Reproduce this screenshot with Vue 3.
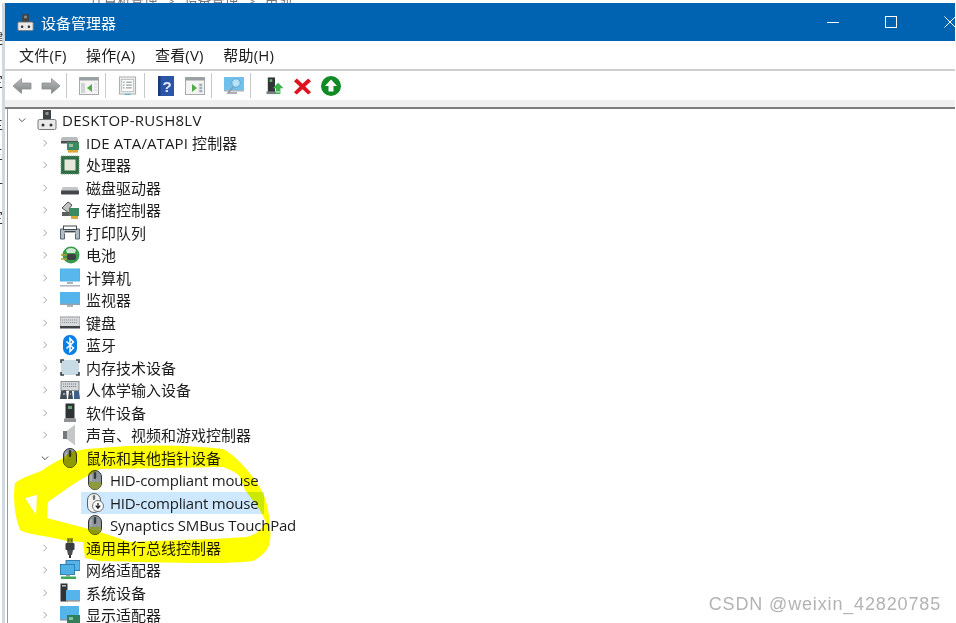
<script setup>
const fragments = [
  { y: 27, t: '键' }, { y: 70, t: '定' }, { y: 113, t: '主' }, { y: 143, t: '三' },
  { y: 173, t: '十' }, { y: 206, t: '定' }
]
const rows = [
  { level: 0, open: true, icon: 'dm', text: 'DESKTOP-RUSH8LV' },
  { level: 1, icon: 'ide', text: 'IDE ATA/ATAPI 控制器', wide: true },
  { level: 1, icon: 'cpu', text: '处理器' },
  { level: 1, icon: 'disk', text: '磁盘驱动器' },
  { level: 1, icon: 'storage', text: '存储控制器' },
  { level: 1, icon: 'printer', text: '打印队列' },
  { level: 1, icon: 'battery', text: '电池' },
  { level: 1, icon: 'computer', text: '计算机' },
  { level: 1, icon: 'monitor', text: '监视器' },
  { level: 1, icon: 'keyboard', text: '键盘' },
  { level: 1, icon: 'bluetooth', text: '蓝牙' },
  { level: 1, icon: 'memory', text: '内存技术设备' },
  { level: 1, icon: 'hid', text: '人体学输入设备' },
  { level: 1, icon: 'software', text: '软件设备' },
  { level: 1, icon: 'sound', text: '声音、视频和游戏控制器' },
  { level: 1, open: true, icon: 'mouse', text: '鼠标和其他指针设备' },
  { level: 2, icon: 'mouse', text: 'HID-compliant mouse' },
  { level: 2, icon: 'mouseoff', text: 'HID-compliant mouse', selected: true },
  { level: 2, icon: 'mouse', text: 'Synaptics SMBus TouchPad' },
  { level: 1, icon: 'usb', text: '通用串行总线控制器' },
  { level: 1, icon: 'network', text: '网络适配器' },
  { level: 1, icon: 'system', text: '系统设备' },
  { level: 1, icon: 'display', text: '显示适配器' }
]
const menus = ['文件(F)', '操作(A)', '查看(V)', '帮助(H)']
const toolbar = [
  ['back', 'fwd'], ['winleft'], ['sheet'], ['help', 'winright'], ['scan'], ['devup', 'redx', 'greenup']
]
</script>

<template>
  <div class="page">
    <svg class="defs" aria-hidden="true">
      <defs>
        <symbol id="dm" viewBox="0 0 20 20">
          <rect x="6" y="0" width="8" height="11" fill="#3f4347"/>
          <rect x="8.500" y="2" width="3" height="3" fill="#8a9a8f"/>
          <rect x="1" y="9.500" width="18" height="10" rx="1.500" fill="#e9e9e9" stroke="#77797b"/>
          <circle cx="6" cy="15" r="1.500" fill="#333"/><circle cx="14" cy="15" r="1.500" fill="#333"/>
        </symbol>
        <symbol id="ide" viewBox="0 0 20 20">
          <path d="M1 6q0-2 2-2h13q2 0 2 2v4H1z" fill="#b9bcbc"/>
          <rect x="1" y="8" width="17" height="2.500" fill="#4d5152"/>
          <rect x="7" y="9" width="12" height="8" fill="#3c8a62"/>
          <rect x="9" y="11" width="4" height="3" fill="#9dbfa8"/>
          <rect x="8" y="17" width="10" height="2.600" fill="#d9a935"/>
        </symbol>
        <symbol id="cpu" viewBox="0 0 20 20">
          <rect x="1" y="1" width="18" height="18" fill="#2f6d45" stroke="#6f9c7a" stroke-dasharray="1 1"/>
          <rect x="4.500" y="4.500" width="11" height="11" fill="#e6e8dc"/>
        </symbol>
        <symbol id="disk" viewBox="0 0 20 20">
          <path d="M3 9h14l2 3v4H1v-4z" fill="#c4c6c6"/>
          <rect x="1" y="12.500" width="18" height="4" rx="1" fill="#43474a"/>
        </symbol>
        <symbol id="storage" viewBox="0 0 20 20">
          <path d="M2 8l6-6 4 3-3 4 3 2-3 2z" fill="#c2c4c4" stroke="#4d5050"/>
          <rect x="2" y="12" width="11" height="4" fill="#5b5f60"/>
          <rect x="9" y="8" width="10" height="8" fill="#3c8a62"/>
          <rect x="11" y="16" width="7" height="3" fill="#d9a935"/>
        </symbol>
        <symbol id="printer" viewBox="0 0 20 20">
          <path d="M0.500 6h19v10h-4v-5h-11v5h-4z" fill="#aebcc6" stroke="#5d666c"/>
          <rect x="3.500" y="3" width="13" height="3.500" fill="#fff" stroke="#44494c"/>
          <rect x="5" y="8" width="10" height="8" fill="#fff"/>
          <rect x="4.500" y="8" width="11" height="1.400" fill="#3f4447"/>
        </symbol>
        <symbol id="battery" viewBox="0 0 20 20">
          <circle cx="11" cy="10" r="8.500" fill="#3b9a4c"/>
          <path d="M6 5q5-4 10 0l-1 3H7z" fill="#cde8d0"/>
          <rect x="7" y="9" width="9" height="6" rx="2" fill="#3d4042"/>
          <path d="M1 10h6M1 14h6" stroke="#b79a33" stroke-width="1.500"/>
        </symbol>
        <symbol id="computer" viewBox="0 0 20 20">
          <rect x="0" y="0.500" width="20" height="13" rx=".5" fill="#4fb0e8"/>
          <rect x="1" y="1.500" width="18" height="11" fill="#58b8ee"/>
          <rect x="7" y="14" width="6" height="2" fill="#a8b4bc"/>
          <rect x="0" y="17" width="20" height="1.600" fill="#b0bac0"/>
        </symbol>
        <symbol id="monitor" viewBox="0 0 20 20">
          <rect x="0" y="2" width="20" height="13" rx=".5" fill="#55b4ec"/>
          <rect x="0" y="13.500" width="20" height="1.500" fill="#8fa4b0"/>
          <rect x="7" y="15" width="6" height="2" fill="#a8b4bc"/>
        </symbol>
        <symbol id="keyboard" viewBox="0 0 20 20">
          <rect x="0" y="4" width="20" height="10" fill="#d8dbdd" stroke="#999"/>
          <path d="M2 7h16M2 9.500h16" stroke="#8f9498" stroke-width="1.200" stroke-dasharray="1.200 .8"/>
          <rect x="0" y="13" width="20" height="2.500" fill="#3f4244"/>
        </symbol>
        <symbol id="bluetooth" viewBox="0 0 20 20">
          <rect x="3" y="0" width="14" height="20" rx="6.500" fill="#0a7fe6"/>
          <path d="M6.500 6.500l7 6.500-3.500 3.500V3.500l3.500 3.500-7 6.500" fill="none" stroke="#fff" stroke-width="1.500"/>
        </symbol>
        <symbol id="memory" viewBox="0 0 20 20">
          <rect x="1" y="2" width="18" height="15" rx="1" fill="#c9dce6"/>
          <path d="M1 5V2h3M16 2h3v3M19 14v3h-3M4 17H1v-3" fill="none" stroke="#3c4144" stroke-width="1.600"/>
        </symbol>
        <symbol id="hid" viewBox="0 0 20 20">
          <rect x="1" y="1.500" width="18" height="9" fill="#d5d8da" stroke="#8a8f92"/>
          <path d="M3 4h14M3 6.500h14" stroke="#7d8286" stroke-dasharray="1.200 .8"/>
          <path d="M0 19l1-8 5-1 1 9zM8 19l1-8h3l1 8z" fill="#3f4c58"/>
          <path d="M14 19v-8h5l1 8z" fill="#3f5f88"/>
          <path d="M3 14h2M10 14h1" stroke="#fff"/>
        </symbol>
        <symbol id="software" viewBox="0 0 20 20">
          <rect x="5.500" y="0.500" width="9" height="15" fill="#2f3335"/>
          <rect x="8" y="3" width="4" height="3" fill="#62a76e"/>
          <rect x="4" y="15.500" width="12" height="3.500" fill="#8f9396"/>
        </symbol>
        <symbol id="sound" viewBox="0 0 20 20">
          <path d="M3 6h4l8-6v20l-8-6H3z" fill="#a3a7a8"/>
          <path d="M7 6l8-6v20l-8-6z" fill="#c4c6c7"/>
          <rect x="3" y="6" width="4" height="8" fill="#74787a"/>
        </symbol>
        <symbol id="mouse" viewBox="0 0 20 20">
          <rect x="3.500" y="0.500" width="13" height="19" rx="6.500" fill="#8f969c" stroke="#2f3336"/>
          <path d="M4 12h12v1.500a6 6 0 0 1-12 0z" fill="#8f9a3a"/>
          <rect x="8.800" y="2" width="2.400" height="7" rx="1.200" fill="#34383b"/>
          <path d="M6 4.500v6.500" stroke="#c2c6c9"/>
        </symbol>
        <symbol id="mouseoff" viewBox="0 0 20 20">
          <rect x="2.500" y="0.500" width="13" height="19" rx="6.500" fill="#f0f1f2" stroke="#5c6063"/>
          <rect x="7.800" y="2" width="2.400" height="5" rx="1.200" fill="#6f7376"/>
          <circle cx="13" cy="13" r="5.500" fill="#fafafa" stroke="#777"/>
          <path d="M13 10v4.500M10.800 12.600l2.200 2.600 2.200-2.600" fill="none" stroke="#222" stroke-width="1.300"/>
        </symbol>
        <symbol id="usb" viewBox="0 0 20 20">
          <rect x="7" y="0" width="6" height="5" fill="#8f9a3a"/>
          <path d="M8.500 1.500v2M11.500 1.500v2" stroke="#555"/>
          <rect x="5.500" y="5" width="9" height="7" rx="1" fill="#383c3f"/>
          <path d="M7 12h6l-1 5H8z" fill="#4a4e51"/>
          <rect x="9" y="17" width="2" height="3" fill="#2f3336"/>
        </symbol>
        <symbol id="network" viewBox="0 0 20 20">
          <rect x="6" y="0.500" width="14" height="10" fill="#56b2e8" stroke="#2f7fb0"/>
          <rect x="0.500" y="4.500" width="14" height="10" fill="#4fb0e8" stroke="#2f7fb0"/>
          <rect x="6" y="14.500" width="4" height="2" fill="#8aa0a8"/>
          <rect x="1" y="16.500" width="15" height="2.500" fill="#42a854"/>
        </symbol>
        <symbol id="system" viewBox="0 0 20 20">
          <rect x="0.500" y="0.500" width="7" height="18" fill="#303437"/>
          <rect x="2" y="2" width="4" height="1.600" fill="#b8bcbe"/>
          <rect x="6" y="7" width="14" height="10" fill="#55b4ec"/>
          <rect x="6" y="17" width="14" height="1.600" fill="#8f9ba2"/>
        </symbol>
        <symbol id="display" viewBox="0 0 20 20">
          <rect x="0" y="1" width="19" height="13" fill="#55b4ec"/>
          <rect x="7" y="10" width="13" height="8" fill="#2f8058"/>
          <rect x="9" y="12" width="4" height="3" fill="#8fb9a0"/>
          <rect x="0" y="14" width="7" height="1.600" fill="#8f9ba2"/>
        </symbol>

        <linearGradient id="arr" x1="0" y1="0" x2="0" y2="1">
          <stop offset="0" stop-color="#b9bbbb"/><stop offset="1" stop-color="#7f8483"/>
        </linearGradient>
        <symbol id="back" viewBox="0 0 20 20">
          <path d="M1 10L9.500 2.500V7H19v6H9.500v4.500z" fill="url(#arr)" stroke="#8c9190" stroke-width=".8"/>
        </symbol>
        <symbol id="fwd" viewBox="0 0 20 20">
          <path d="M19 10L10.500 2.500V7H1v6h9.500v4.500z" fill="url(#arr)" stroke="#8c9190" stroke-width=".8"/>
        </symbol>
        <symbol id="winleft" viewBox="0 0 20 20">
          <rect x="0.500" y="1.500" width="19" height="17" fill="#f4f5f3" stroke="#a7abad"/>
          <rect x="0.500" y="1.500" width="19" height="3" fill="#98a0a4"/>
          <rect x="2" y="7" width="4" height="10" fill="#cfd6d8"/>
          <path d="M8 12l5-4v8z" fill="#53a945"/>
          <path d="M15 8h3M15 11h3M15 14h3" stroke="#cfd6d8"/>
        </symbol>
        <symbol id="sheet" viewBox="0 0 20 20">
          <rect x="1.500" y="0.500" width="17" height="18" fill="#f1f2ef" stroke="#a7aaa9"/>
          <rect x="3.500" y="3" width="13" height="13" fill="#fbfbf8" stroke="#b9bcbb"/>
          <path d="M5 6h2M8.500 6h6M5 9h2M8.500 9h6M5 12h2M8.500 12h6" stroke="#7d8b94"/>
          <rect x="7" y="18" width="6" height="1.500" fill="#65b9d8"/>
        </symbol>
        <symbol id="help" viewBox="0 0 20 20">
          <rect x="2" y="0" width="16" height="20" fill="#2b56a8"/>
          <rect x="2" y="0" width="2.500" height="20" fill="#1b3878"/>
          <text x="11" y="15.500" font-size="15" font-weight="700" text-anchor="middle" fill="#e8eefc" font-family="Liberation Sans, sans-serif">?</text>
        </symbol>
        <symbol id="winright" viewBox="0 0 20 20">
          <rect x="0.500" y="1.500" width="19" height="17" fill="#f4f5f3" stroke="#a7abad"/>
          <rect x="0.500" y="1.500" width="19" height="3" fill="#98a0a4"/>
          <path d="M12 12L7 8v8z" fill="#53a945"/>
          <rect x="13.500" y="7" width="4.500" height="10" fill="#dde2e4"/>
          <path d="M14.500 9h2.500M14.500 12h2.500M14.500 15h2.500" stroke="#6b767c"/>
        </symbol>
        <symbol id="scan" viewBox="0 0 20 20">
          <rect x="0" y="1" width="20" height="13" fill="#6fc0ea"/>
          <rect x="0" y="14" width="20" height="1.500" fill="#aab4ba"/>
          <circle cx="12" cy="7" r="4.200" fill="#b9e2f6" stroke="#5aa6d2"/>
          <path d="M9 11l-5 6h9" fill="none" stroke="#8e979d" stroke-width="1.400"/>
        </symbol>
        <symbol id="devup" viewBox="0 0 20 20">
          <rect x="2" y="0.500" width="8" height="17" fill="#2f3437"/>
          <rect x="4" y="2.500" width="3" height="3" fill="#5db85e"/>
          <rect x="0.500" y="16" width="11" height="3" fill="#7b8083"/>
          <path d="M13.500 6.500l6 6H16v6.500h-5V12.500H7.500z" fill="#39b54a"/>
          <rect x="11" y="16" width="5" height="1.200" fill="#d7f0da"/>
        </symbol>
        <symbol id="redx" viewBox="0 0 20 20">
          <path d="M4 2l6 5.500L16 2l3 3-6 5.500 6 6L16 19l-6-5.500L4 19l-3-2.500 6-6-6-5.500z" fill="#dd1420"/>
        </symbol>
        <symbol id="greenup" viewBox="0 0 20 20">
          <circle cx="10" cy="10" r="10" fill="#0f8a24"/>
          <path d="M10 3.500l6 6.500h-3.500v5.500h-5V10H4z" fill="#fff"/>
        </symbol>
      </defs>
    </svg>

    <div class="behind-top">计算机管理 &gt; 设备管理 &gt; 电池</div>

    <div class="body">
      <div class="behind-left">
        <span v-for="f in fragments" :key="f.y" class="frag" :style="{ top: f.y + 'px' }">{{ f.t }}</span>
      </div>

      <div class="window">
        <header class="titlebar">
          <svg class="title-ico"><use href="#dm"/></svg>
          <span class="title">设备管理器</span>
          <div class="controls">
            <svg class="ctl" viewBox="0 0 12 12"><path d="M0 6.500h12" stroke="#fff" stroke-width="1"/></svg>
            <svg class="ctl" viewBox="0 0 12 12"><rect x=".5" y=".5" width="11" height="11" fill="none" stroke="#fff"/></svg>
            <svg class="ctl" viewBox="0 0 12 12"><path d="M.5.500l11 11M11.500.500l-11 11" stroke="#fff"/></svg>
          </div>
        </header>

        <nav class="menubar">
          <span v-for="m in menus" :key="m">{{ m }}</span>
        </nav>

        <div class="toolbar">
          <div v-for="(g, i) in toolbar" :key="i" class="tgroup" :class="'g' + i">
            <svg v-for="n in g" :key="n" class="tool" :class="'t-' + n"><use :href="'#' + n"/></svg>
          </div>
        </div>
        <div class="band"></div>

        <main class="tree">
          <div v-for="(r, i) in rows" :key="i" class="row" :class="'l' + r.level">
            <svg v-if="r.level < 2" class="chev" viewBox="0 0 8 8">
              <path v-if="r.open" d="M.8 2.500L4 5.700 7.200 2.500" fill="none" stroke="#555" stroke-width="1"/>
              <path v-else d="M2.500.800L5.700 4 2.500 7.200" fill="none" stroke="#a6a6a6" stroke-width="1"/>
            </svg>
            <div class="item" :class="{ selected: r.selected }">
              <svg class="ico"><use :href="'#' + r.icon"/></svg>
              <span class="label" :class="{ wide: r.wide }">{{ r.text }}</span>
            </div>
          </div>
        </main>
      </div>
    </div>

    <svg class="marker" viewBox="0 0 956 623" aria-hidden="true">
      <path fill="#ffff00" fill-rule="evenodd" d="M223 449C235 455 250 472 257 483C265 495 268 503 270 527C272 545 268 553 253 561C225 565 150 562 100 561L85 558L83 542L67 541C45 535 28 535 20 530C14 515 13 495 15 483C25 476 35 474 43 470C52 463 60 460 63 458C70 450 85 449 100 448C140 444 190 445 223 449Z M100 469L223 467C232 470 238 474 240 477L245 490L260 510L266 522C262 530 255 535 247 537L213 539L180 540L130 542L100 532L47 518L48 502C58 495 70 486 80 480Z M25 498L37 495L36 515Z"/>
    </svg>

    <div class="watermark">CSDN @weixin_42820785</div>
  </div>
</template>

<style scoped>
.page {
  position: relative;
  width: 956px;
  height: 623px;
  overflow: hidden;
  background: #fff;
  font-family: "Open Sans", "Noto Sans CJK SC", sans-serif;
  color: #1c1c1c;
  filter: blur(0.35px);
}
.defs { position: absolute; width: 0; height: 0; }
.behind-top {
  height: 3px;
  overflow: hidden;
  padding-left: 90px;
  font-size: 13.5px;
  line-height: 3px;
  color: #777;
  white-space: nowrap;
  word-spacing: 6px;
  background: #fff;
}
.body { display: flex; height: 620px; padding-right: 1px; }
.behind-left {
  position: relative;
  width: 5px;
  flex: none;
  overflow: hidden;
  background: linear-gradient(90deg, #fff 0 2px, #cfd9e0 2px);
}
.frag {
  position: absolute;
  left: -11px;
  font-size: 14px;
  line-height: 16px;
  color: #333;
}
.window { flex: 1; min-width: 0; display: flex; flex-direction: column; background: #fff; }

.titlebar {
  height: 38px;
  flex: none;
  display: flex;
  align-items: center;
  background: #0063b1;
  color: #fff;
  padding-left: 12px;
}
.title-ico { width: 17px; height: 19px; margin-right: 7px; }
.title { font-size: 15px; }
.controls { margin-left: auto; display: flex; gap: 46px; }
.ctl { width: 12px; height: 12px; display: block; overflow: visible; }
.controls .ctl:last-child { margin: 0 -1px 0 1px; }

.menubar {
  height: 30px;
  flex: none;
  box-sizing: border-box;
  display: flex;
  align-items: center;
  gap: 19.5px;
  padding: 0 0 1px 14px;
  font-size: 15px;
  letter-spacing: 0.2px;
  border-bottom: 2px solid #cfcfcf;
}
.toolbar { height: 29px; flex: none; display: flex; align-items: center; padding-left: 7px; }
.tgroup { display: flex; align-items: center; height: 25px; gap: 9px; padding: 0 6px 0 12px; }
.tgroup + .tgroup { border-left: 1px solid #c9c9c9; }
.tool { width: 20px; height: 20px; display: block; }
.g0 { padding: 0 5px 0 0; }
.g2 { padding-right: 7px; }
.g3 { padding-left: 11px; }
.g5 { padding-left: 15px; }
.t-sheet, .t-redx { width: 19px; }
.t-devup { width: 18px; }
.band { height: 7px; flex: none; background: #f0f0f0; border-bottom: 2px solid #7d7d7d; }

.tree {
  flex: 1;
  min-height: 0;
  overflow: hidden;
  margin-left: 2px;
  border-left: 1px solid #9a9a9a;
}
.row { height: 22.5px; display: flex; align-items: center; white-space: nowrap; }
.chev { width: 8px; height: 8px; flex: none; }
.l0 { padding-left: 10px; }
.l0 .chev { margin-right: 11px; }
.l0 .ico { margin-right: 5px; }
.l0 .label { letter-spacing: 0.3px; }
.l1 { padding-left: 33px; }
.l1 .chev { margin-right: 11px; }
.l1 .ico { margin-right: 6px; }
.l2 { padding-left: 73px; }
.item { display: flex; align-items: center; height: 100%; }
.ico { width: 20px; height: 20px; display: block; flex: none; }
.l2 .item { padding: 0 6px 0 4px; }
.l2 .ico { margin-right: 5px; }
.l2 .label { letter-spacing: -0.2px; }
.selected { background: #cde8ff; }
.label { font-size: 15px; line-height: 22px; }
.label.wide { letter-spacing: 0.12px; }

.marker {
  position: absolute;
  left: 0;
  top: 0;
  width: 956px;
  height: 623px;
  mix-blend-mode: multiply;
  pointer-events: none;
}
.watermark {
  position: absolute;
  right: 15px;
  bottom: 8px;
  font-family: "Liberation Sans", sans-serif;
  font-size: 18px;
  line-height: 22px;
  letter-spacing: 0.85px;
  color: #b3b3b3;
}
</style>
